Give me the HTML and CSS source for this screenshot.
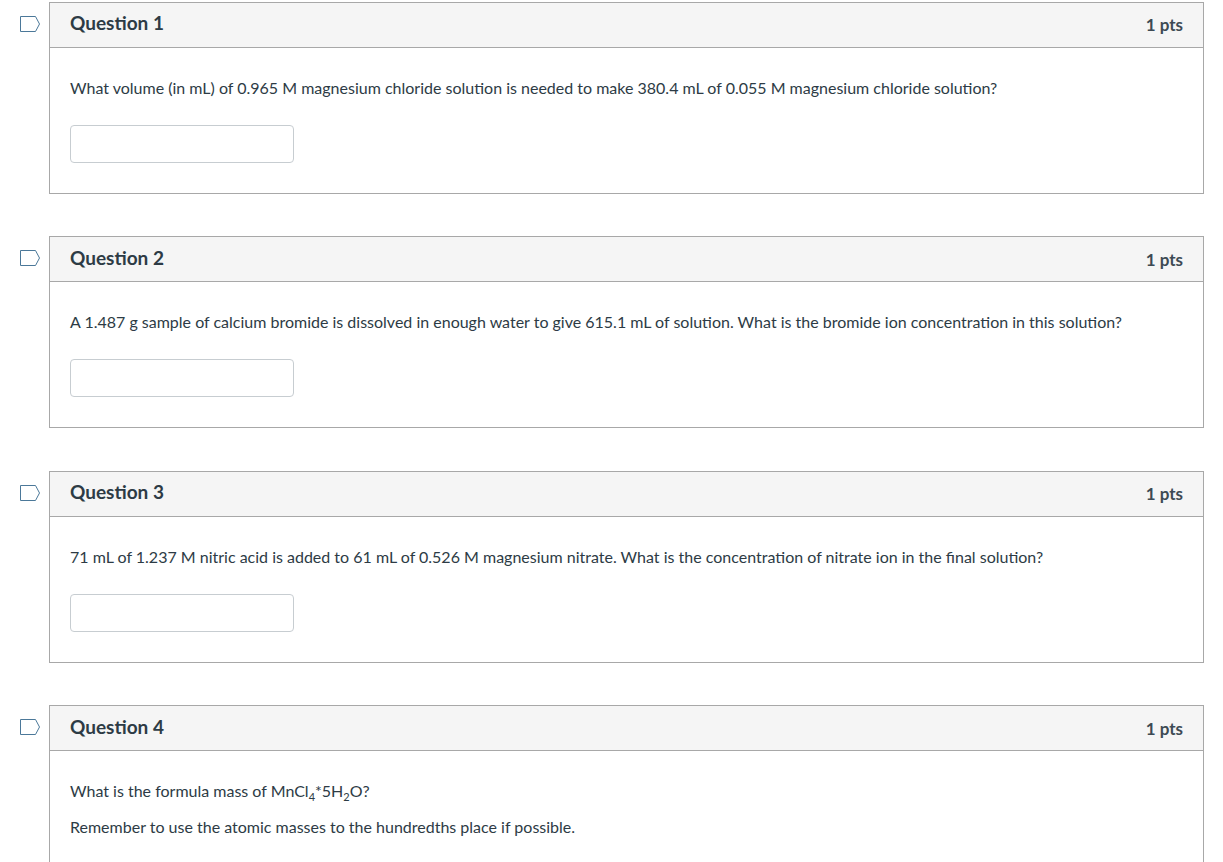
FILE: index.html
```html
<!DOCTYPE html>
<html>
<head>
<meta charset="utf-8">
<link rel="stylesheet" href="styles.css">
</head>
<body>
<div class="quiz">
  <div class="qrow">
    <div class="flagcol">
      <svg class="flag" width="21" height="16" viewBox="0 0 21 16"><path d="M0.5 0.5 H15.5 L19.5 8 L15.5 15.5 H0.5 Z" fill="none" stroke="#4b7899" stroke-width="1"/></svg>
    </div>
    <div class="question">
      <div class="header"><span class="qname">Question 1</span><span class="pts">1 pts</span></div>
      <div class="body">
        <p class="qtext">What volume (in mL) of 0.965 M magnesium chloride solution is needed to make 380.4 mL of 0.055 M magnesium chloride solution?</p>
        <input class="answer" type="text">
      </div>
    </div>
  </div>
  <div class="qrow">
    <div class="flagcol">
      <svg class="flag" width="21" height="16" viewBox="0 0 21 16"><path d="M0.5 0.5 H15.5 L19.5 8 L15.5 15.5 H0.5 Z" fill="none" stroke="#4b7899" stroke-width="1"/></svg>
    </div>
    <div class="question">
      <div class="header"><span class="qname">Question 2</span><span class="pts">1 pts</span></div>
      <div class="body">
        <p class="qtext">A 1.487 g sample of calcium bromide is dissolved in enough water to give 615.1 mL of solution. What is the bromide ion concentration in this solution?</p>
        <input class="answer" type="text">
      </div>
    </div>
  </div>
  <div class="qrow">
    <div class="flagcol">
      <svg class="flag" width="21" height="16" viewBox="0 0 21 16"><path d="M0.5 0.5 H15.5 L19.5 8 L15.5 15.5 H0.5 Z" fill="none" stroke="#4b7899" stroke-width="1"/></svg>
    </div>
    <div class="question">
      <div class="header"><span class="qname">Question 3</span><span class="pts">1 pts</span></div>
      <div class="body">
        <p class="qtext">71 mL of 1.237 M nitric acid is added to 61 mL of 0.526 M magnesium nitrate. What is the concentration of nitrate ion in the final solution?</p>
        <input class="answer" type="text">
      </div>
    </div>
  </div>
  <div class="qrow">
    <div class="flagcol">
      <svg class="flag" width="21" height="16" viewBox="0 0 21 16"><path d="M0.5 0.5 H15.5 L19.5 8 L15.5 15.5 H0.5 Z" fill="none" stroke="#4b7899" stroke-width="1"/></svg>
    </div>
    <div class="question">
      <div class="header"><span class="qname">Question 4</span><span class="pts">1 pts</span></div>
      <div class="body body-tall">
        <p class="qtext">What is the formula mass of MnCl<sub>4</sub>*5H<sub>2</sub>O?</p>
        <p class="qtext">Remember to use the atomic masses to the hundredths place if possible.</p>
      </div>
    </div>
  </div>
</div>
</body>
</html>
```
FILE: styles.css
```css
html, body {
  margin: 0;
  padding: 0;
  background: #fff;
}
body {
  font-family: Lato, "Liberation Sans", sans-serif;
  color: #2d3b45;
  overflow: hidden;
}
.quiz {
  padding: 1.5px 19px 0 0;
  display: flex;
  flex-direction: column;
  gap: 42.5px;
}
.qrow {
  display: flex;
}
.flagcol {
  width: 49px;
  flex: none;
  padding-left: 20px;
  box-sizing: border-box;
}
.flag {
  margin-top: 14px;
  display: block;
}
.question {
  flex: 1;
  border: 1px solid #a8a8a8;
}
.header {
  height: 44px;
  background: #f5f5f5;
  border-bottom: 1px solid #a8a8a8;
  display: flex;
  align-items: center;
  justify-content: space-between;
  padding: 0 20px;
}
.qname {
  font-size: 19px;
  font-weight: 700;
  margin-top: -4px;
}
.pts {
  font-size: 17px;
  font-weight: 700;
  color: #3d4a54;
  margin-top: 0;
}
.body {
  height: 145px;
  padding: 28px 20px 0 20px;
  box-sizing: border-box;
  overflow: hidden;
}
.body-tall {
  height: 180px;
}
.qtext {
  margin: 0 0 12px 0;
  font-size: 16px;
  line-height: 24px;
}
.qtext sub {
  font-size: 11px;
  line-height: 0;
}
.answer {
  display: block;
  margin-top: 25px;
  width: 224px;
  height: 38px;
  box-sizing: border-box;
  border: 1px solid #c7cdd1;
  border-radius: 4px;
  background: #fff;
  font-family: Lato, sans-serif;
  font-size: 16px;
  padding: 0 8px;
}
```
